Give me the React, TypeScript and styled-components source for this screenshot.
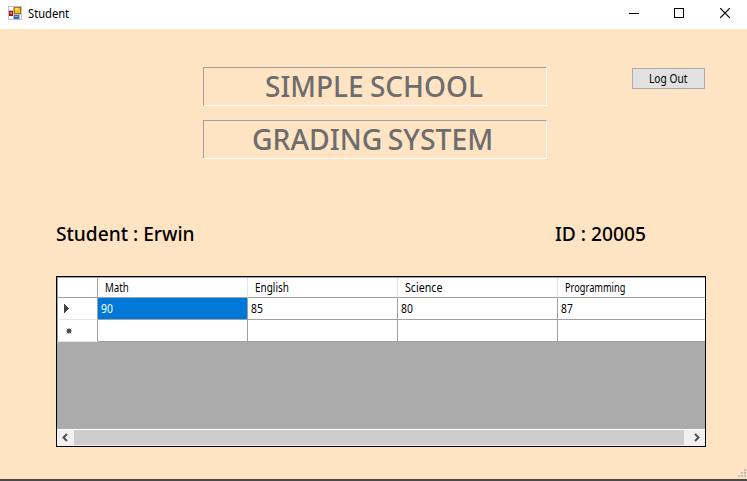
import React from "react";
import styled, { createGlobalStyle } from "styled-components";

const GlobalStyle = createGlobalStyle`
  *, *::before, *::after { box-sizing: border-box; }
  body { margin: 0; background: #ffe4c4; overflow: hidden; }
`;

const Window = styled.div`
  width: 747px;
  height: 481px;
  display: flex;
  flex-direction: column;
  background: #ffe4c4;
  color: #000;
  font-family: "Noto Sans", "Open Sans", sans-serif;
  font-size: 12px;
`;

const TitleBar = styled.header`
  height: 29px;
  flex: none;
  display: flex;
  align-items: flex-start;
  background: #fff;
  padding-left: 8px;
`;

const AppIcon = styled.svg`
  margin-top: 6px;
  flex: none;
`;

/* Text drawn in a slightly condensed face, scaled from its left edge. */
const Label = styled.span<{ $scale?: number; $wordGap?: number }>`
  display: inline-block;
  white-space: pre;
  transform: scaleX(${(p) => p.$scale ?? 1});
  transform-origin: left center;
  word-spacing: ${(p) => p.$wordGap ?? 0}px;
`;

const Caption = styled.div`
  flex: 1;
  padding-left: 6px;
  line-height: 28px;
`;

const WindowButtons = styled.div`
  display: flex;
  margin-right: -1px;
`;

const WindowButton = styled.button`
  width: 46px;
  height: 27px;
  padding: 0;
  border: 0;
  background: transparent;
  display: flex;
  align-items: center;
  justify-content: center;
`;

const Client = styled.main`
  height: 450px;
  flex: none;
  display: grid;
  grid-template-columns: 56px 147px 344px 85px 73px 1fr;
  grid-template-rows: 38px 92px 63px 54px 171px 1fr;
`;

const Headings = styled.div`
  grid-area: 2 / 3;
  display: flex;
  flex-direction: column;
  gap: 14px;
`;

const Heading = styled.h1<{ $indent: number }>`
  margin: 0;
  height: 39px;
  padding-left: ${(p) => p.$indent}px;
  border: 1px solid;
  border-color: #a0a0a0 #fff #fff #a0a0a0;
  color: #6d6d6d;
  font-weight: 500;
  font-size: 28px;
  line-height: 37px;
`;

const LogOut = styled.button`
  grid-area: 2 / 5;
  margin-top: 1px;
  width: 73px;
  height: 21px;
  padding: 0 0 0 16px;
  border: 1px solid #adadad;
  background: #e1e1e1;
  font: inherit;
  line-height: 19px;
  text-align: left;
  color: #000;
`;

const Details = styled.div`
  grid-area: 4 / 1 / 5 / 7;
  display: flex;
  font-size: 20px;
  font-weight: 500;
  line-height: 24px;
  padding-left: 56px;
`;

const Detail = styled.div<{ $width: number }>`
  width: ${(p) => p.$width}px;
`;

const DataGrid = styled.section`
  grid-area: 5 / 1 / 6 / 7;
  margin-left: 56px;
  width: 650px;
  height: 171px;
  display: flex;
  flex-direction: column;
  border: 1px solid #000;
  background: #ababab;
`;

const Row = styled.div<{ $height: number }>`
  height: ${(p) => p.$height}px;
  flex: none;
  display: grid;
  grid-template-columns: 41px 150px 150px 160px 147px;
  grid-template-rows: 100%;
  background: #fff;
`;

const HeaderRow = styled(Row)`
  border-top: 1px solid #a0a0a0;
`;

const RowHeader = styled.div<{ $bottom: string }>`
  border: 0 solid #a0a0a0;
  border-width: 0 1px 1px 1px;
  border-bottom-color: ${(p) => p.$bottom};
  display: flex;
  align-items: center;
`;

const ColumnHeader = styled.div<{ $last?: boolean }>`
  border-bottom: 1px solid #a0a0a0;
  border-right: ${(p) => (p.$last ? "0" : "1px solid #e5e5e5")};
  padding-left: 7px;
  line-height: 20px;
`;

const Cell = styled.div<{ $selected?: boolean; $last?: boolean }>`
  border-bottom: 1px solid #a0a0a0;
  border-right: ${(p) => (p.$last ? "0" : "1px solid #a0a0a0")};
  padding-left: 3px;
  line-height: 22px;
  background: ${(p) => (p.$selected ? "#0078d7" : "#fff")};
  color: ${(p) => (p.$selected ? "#fff" : "#000")};
`;

const ScrollBar = styled.div`
  margin-top: auto;
  height: 17px;
  flex: none;
  display: grid;
  grid-template-columns: 17px 1fr 21px;
  border-top: 1px solid #fff;
  border-bottom: 1px solid #f0f0f0;
  background: #f0f0f0;
`;

const Thumb = styled.div`
  background: #cdcdcd;
`;

const Grip = styled.svg`
  grid-area: 6 / 6;
  justify-self: end;
  align-self: end;
  margin: 0 1px 2px 0;
`;

const Desktop = styled.footer`
  height: 2px;
  flex: none;
  background: #4a4848;
`;

const columns = [
  { name: "Math", value: "90", scale: 0.81 },
  { name: "English", value: "85", scale: 0.83 },
  { name: "Science", value: "80", scale: 0.89 },
  { name: "Programming", value: "87", scale: 0.77 },
];

const last = columns.length - 1;

export default function App() {
  return (
    <>
      <GlobalStyle />
      <Window>
        <TitleBar>
          <AppIcon width="14" height="14" shapeRendering="crispEdges">
            <rect width="14" height="14" fill="#bfbfbf" />
            <path d="M1 1h4v3H1zM1 10h4v3H1zM12 9h1v4h-1z" fill="#fff" />
            <rect x="1" y="5" width="4" height="5" fill="#a81414" />
            <rect x="2" y="6" width="2" height="2" fill="#e87868" />
            <rect x="6" y="1" width="7" height="7" fill="#a87800" />
            <rect x="7" y="2" width="5" height="5" fill="#f8bd20" />
            <rect x="7" y="2" width="3" height="2" fill="#ffe478" />
            <rect x="6" y="9" width="5" height="4" fill="#3269d4" />
            <rect x="7" y="10" width="3" height="1" fill="#83abf5" />
          </AppIcon>
          <Caption><Label $scale={0.93}>Student</Label></Caption>
          <WindowButtons>
            <WindowButton aria-label="Minimize">
              <svg width="12" height="11" shapeRendering="crispEdges"><rect x="2" y="5" width="10" height="1" /></svg>
            </WindowButton>
            <WindowButton aria-label="Maximize">
              <svg width="10" height="11" shapeRendering="crispEdges"><rect x=".5" y=".5" width="9" height="9" fill="none" stroke="#000" /></svg>
            </WindowButton>
            <WindowButton aria-label="Close">
              <svg width="10" height="11"><path d="M0 0l10 10M10 0L0 10" stroke="#000" strokeWidth="1.2" /></svg>
            </WindowButton>
          </WindowButtons>
        </TitleBar>
        <Client>
          <Headings>
            <Heading $indent={61}><Label $wordGap={-1}>SIMPLE SCHOOL</Label></Heading>
            <Heading $indent={48}><Label $scale={1.012} $wordGap={-2}>GRADING SYSTEM</Label></Heading>
          </Headings>
          <LogOut><Label $scale={0.85}>Log Out</Label></LogOut>
          <Details>
            <Detail $width={499}><Label $scale={0.957}>Student : Erwin</Label></Detail>
            <Detail $width={120}><Label $scale={0.96}>ID : 20005</Label></Detail>
          </Details>
          <DataGrid>
            <HeaderRow $height={21}>
              <RowHeader $bottom="#a0a0a0" />
              {columns.map((c, i) => (
                <ColumnHeader key={c.name} $last={i === last}><Label $scale={c.scale}>{c.name}</Label></ColumnHeader>
              ))}
            </HeaderRow>
            <Row $height={22}>
              <RowHeader $bottom="#e5e5e5">
                <svg width="14" height="11" shapeRendering="crispEdges"><path d="M6 1v9l5-4.5z" fill="#404040" /></svg>
              </RowHeader>
              {columns.map((c, i) => (
                <Cell key={c.name} $selected={i === 0} $last={i === last}><Label $scale={0.86}>{c.value}</Label></Cell>
              ))}
            </Row>
            <Row $height={22}>
              <RowHeader $bottom="#e5e5e5">
                <svg width="16" height="9"><rect x="9" y="3" width="4" height="4" fill="#505050" /><path d="M11 2v6M8 5h6M8.5 2.5l5 5M13.5 2.5l-5 5" stroke="#505050" strokeWidth=".8" /></svg>
              </RowHeader>
              {columns.map((c, i) => <Cell key={c.name} $last={i === last} />)}
            </Row>
            <ScrollBar>
              <svg width="17" height="15"><path d="M10 4L6.5 7.5l3.5 3.5" fill="none" stroke="#505050" strokeWidth="2" /></svg>
              <Thumb />
              <svg width="21" height="15"><path d="M11 4l3.5 3.5L11 11" fill="none" stroke="#505050" strokeWidth="2" /></svg>
            </ScrollBar>
          </DataGrid>
          <Grip width="8" height="8" shapeRendering="crispEdges">
            <path d="M6 0h2v2h-2zM3 3h2v2h-2zM6 3h2v2h-2zM0 6h2v2h-2zM3 6h2v2h-2zM6 6h2v2h-2z" fill="#bfbfbf" />
          </Grip>
        </Client>
        <Desktop />
      </Window>
    </>
  );
}
